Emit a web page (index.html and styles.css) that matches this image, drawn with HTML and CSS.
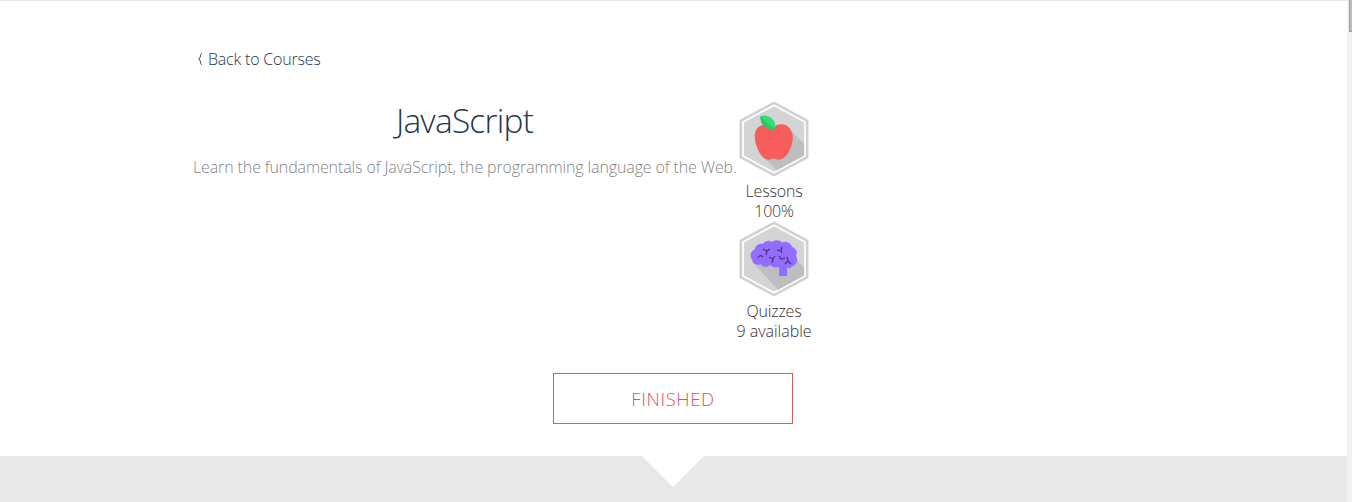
FILE: index.html
```html
<!DOCTYPE html>
<html lang="en">
<head>
<meta charset="utf-8">
<title>JavaScript</title>
<link rel="stylesheet" href="styles.css">
</head>
<body>
<div class="page">
  <main class="content">
    <section class="course">
      <a class="back"><svg class="chevron" width="6" height="14" viewBox="0 0 6 14"><path d="M4.8 1.2Q3.8 2 3.5 4Q3.3 6.3 1.5 7Q3.3 7.7 3.5 10Q3.8 12 4.8 12.8"/></svg><span class="back-text">Back to Courses</span></a>
      <div class="overview">
        <div class="intro">
          <h1 class="title"><span>JavaScript</span></h1>
          <p class="summary"><span>Learn the fundamentals of JavaScript, the programming language of the Web.</span></p>
        </div>
        <div class="stats">
          <div class="stat">
            <svg class="badge" width="70" height="76" viewBox="0 0 70 76">
              <path class="rim" d="M35 0.5L69.5 19V57L35 75.5L0.5 57V19Z"/>
              <path class="face" d="M35 4.2L66 21V55L35 71.8L4 55V21Z"/>
              <path class="shade" d="M49 27L65.200 43V54.500L38 69.200L23 55Z"/>
              <path class="apple" d="M35 25.5C40 22.5 46 22.5 50 26.5C55 31.5 54.500 39 52 46C49.500 53 46 57 41.500 58.500C38.500 59.500 36 57.500 34.500 57.500C33 57.500 31 59.500 28 58.500C23 57 19.500 51 17.500 45C15 37 15 30 19 26.500C23.500 22.500 30 23 35 25.500Z"/>
              <path class="leaf" d="M21.500 15C29 12.500 38 18 36 28C28 30 21 24 21.500 15Z"/>
              <path class="leaf-light" d="M21.500 15C27 22 31 25 36 28C28 30 21 24 21.500 15Z"/>
            </svg>
            <span class="label lessons">Lessons</span>
            <span class="label percent">100%</span>
          </div>
          <div class="stat">
            <svg class="badge" width="70" height="76" viewBox="0 0 70 76">
              <path class="rim" d="M35 0.5L69.5 19V57L35 75.5L0.5 57V19Z"/>
              <path class="face" d="M35 4.2L66 21V55L35 71.8L4 55V21Z"/>
              <path class="shade" d="M16 44L48 42L57 38L65.200 47V54.500L39 68.700Z"/>
              <path class="brain" d="M24 23C26 19.500 31 19 33 21C36 18.500 41 18.500 43 21.500C47 19.500 52 22 53 26C57 27 59 31 57 35C60 39 57 45 52 46V47H48V55H40V46C36 47 33 46 31 44C28 47 23 46 22 43.500C18 45 13 43 13.500 39C10 36 12 29 16 28.500C16 25 20 22 24 23Z"/>
              <path class="folds" d="M24 28L28 30L31 28M28 30L27 34M38 29L42 30L43 26M42 30L43 32M19 37Q21 33 24 36M30 36L34 38L36 35M34 38L33 42M40 35L42 38L46 37M46 43L49 40L52 43M49 40L48 36"/>
            </svg>
            <span class="label quizzes">Quizzes</span>
            <span class="label available">9 available</span>
          </div>
        </div>
      </div>
      <div class="actions"><a class="finished"><span>FINISHED</span></a></div>
    </section>
    <section class="lower"><svg width="62" height="31" viewBox="0 0 62 31"><path class="notch" d="M0 0H62L31 31Z"/></svg></section>
  </main>
  <div class="track"><div class="thumb"></div></div>
</div>
</body>
</html>
```
FILE: styles.css
```css
* { box-sizing: border-box; }
body { margin: 0; background: #fff; font-family: "Open Sans", "Noto Sans", sans-serif; font-weight: 300; color: #333; }
.page { display: flex; height: 502px; overflow: hidden; }
.content { width: 1347px; border-top: 1px solid #e6e6e6; }
.course { height: 455px; padding: 48px 194px 0 193px; }
.back { display: flex; align-items: center; height: 20px; gap: 5px; padding-left: 4px; font-size: 16px; color: #22384f; white-space: nowrap; }
.chevron { fill: none; stroke: #34495e; stroke-width: 1; }
.back-text { letter-spacing: -0.2px; }
.overview { display: flex; height: 304px; padding-top: 32px; }
.intro { width: 543px; text-align: center; white-space: nowrap; }
.title { margin: 0; font-size: 33.5px; line-height: 38px; font-weight: 300; color: #22384f; letter-spacing: -0.8px; }
.summary { margin: 18px 0 0; font-size: 16px; line-height: 20px; color: #858585; letter-spacing: -0.12px; }
.stats { width: 76px; }
.stat { display: flex; flex-direction: column; align-items: center; height: 120px; }
.badge { display: block; flex: none; margin: 0 0 4px; }
.label { font-size: 16px; line-height: 20px; white-space: nowrap; letter-spacing: -0.2px; }
.available { letter-spacing: 0; }
.rim { fill: #d0d1d2; }
.face { fill: #d3d4d5; stroke: #fff; stroke-width: 1.7; }
.shade { fill: #bdbebf; }
.apple { fill: #f65d5b; }
.leaf { fill: #37dc73; }
.leaf-light { fill: #22c964; }
.brain { fill: #936dff; }
.folds { fill: none; stroke: #493080; stroke-width: 1.2; }
.actions { display: flex; justify-content: center; }
.finished { display: flex; align-items: center; justify-content: center; width: 240px; height: 51px; border: 1px solid #dc5b5e; color: #e15257; font-size: 18.5px; letter-spacing: 0.6px; }
.lower { display: flex; justify-content: center; height: 46px; padding-right: 1px; background: #e9e9e9; }
.notch { fill: #fff; }
.track { width: 5px; background: #f1f1f1; }
.thumb { width: 3px; height: 32px; margin-left: 2px; background: #bcbcbc; border-left: 1px solid #a0a0a0; border-bottom: 1px solid #a0a0a0; }
```
